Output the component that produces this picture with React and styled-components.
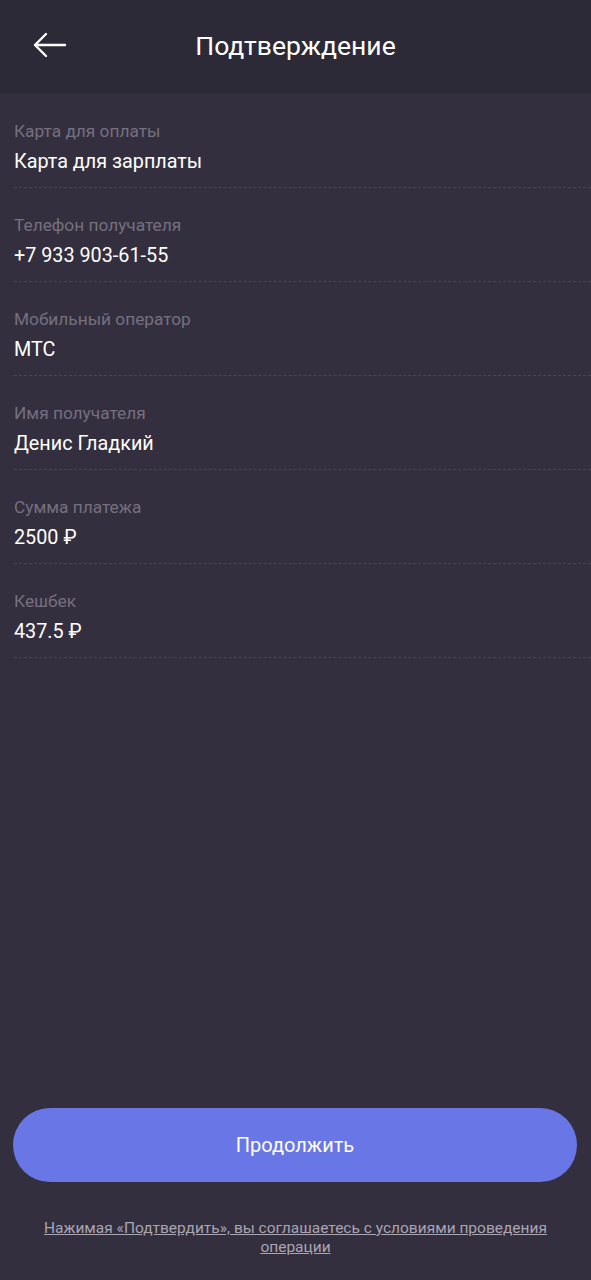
import styled, { createGlobalStyle } from "styled-components";

const GlobalStyle = createGlobalStyle`
    body {
        margin: 0;
        background: #342f3e;
        font-family: Roboto, "Noto Sans", sans-serif;
    }
`;

const Page = styled.div`
    width: 100%;
    height: 1280px;
    display: flex;
    flex-direction: column;
    background: #342f3e;
    color: #ffffff;
`;

const Header = styled.header`
    height: 94px;
    flex-shrink: 0;
    background: #2d2a38;
    display: grid;
    grid-template-columns: 100px 1fr 100px;
    align-items: center;
`;

const BackButton = styled.button`
    background: none;
    border: none;
    padding: 0 0 4px 33px;
    display: flex;
    align-items: center;
    cursor: pointer;
`;

const Title = styled.h1`
    margin: 0 0 4px;
    font-size: 26.5px;
    font-weight: 400;
    text-align: center;
    color: #ffffff;
`;

const List = styled.div`
    flex: 1;
`;

const Row = styled.div`
    margin-left: 14px;
    padding: 27px 0 13px;
    border-bottom: 1px dashed #4a4555;
`;

const Label = styled.div`
    font-size: 17.3px;
    line-height: 20px;
    color: #75707f;
`;

const Value = styled.div`
    margin-top: 9px;
    font-size: 19.8px;
    line-height: 24px;
    color: #ffffff;
`;

const MainButton = styled.button`
    margin: 0 14px 0 13px;
    height: 74px;
    border: none;
    border-radius: 37px;
    background: #6977e6;
    color: #ffffff;
    font-family: Roboto, "Noto Sans", sans-serif;
    font-size: 20px;
    cursor: pointer;
`;

const Note = styled.p`
    margin: 37px 30px 23px;
    text-align: center;
    font-size: 15.5px;
    line-height: 19px;
    color: #a9a5b3;
    text-decoration: underline;
`;

const rows = [
    ["Карта для оплаты", "Карта для зарплаты"],
    ["Телефон получателя", "+7 933 903-61-55"],
    ["Мобильный оператор", "МТС"],
    ["Имя получателя", "Денис Гладкий"],
    ["Сумма платежа", "2500 ₽"],
    ["Кешбек", "437.5 ₽"],
];

function App() {
    return <Page>
        <GlobalStyle />
        <Header>
            <BackButton aria-label="Назад">
                <svg width="34" height="26" viewBox="0 0 34 26" fill="none" stroke="#ffffff" strokeWidth="2.4" strokeLinecap="round" strokeLinejoin="round">
                    <path d="M32 13H2.5" />
                    <path d="M13 2L2 13l11 11" />
                </svg>
            </BackButton>
            <Title>Подтверждение</Title>
            <div />
        </Header>
        <List>
            {rows.map(([label, value]) => (
                <Row key={label}>
                    <Label>{label}</Label>
                    <Value>{value}</Value>
                </Row>
            ))}
        </List>
        <MainButton>Продолжить</MainButton>
        <Note>Нажимая «Подтвердить», вы соглашаетесь с условиями проведения операции</Note>
    </Page>;
}

export default App;
